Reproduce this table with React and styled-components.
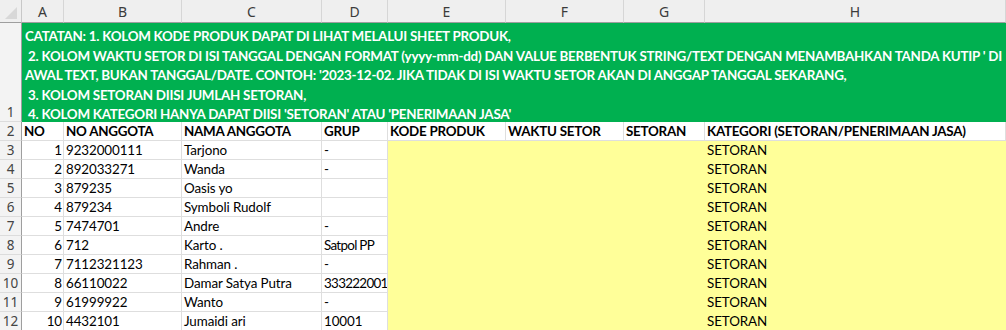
import styled, { createGlobalStyle } from "styled-components";

const GlobalStyle = createGlobalStyle`
  html, body {
    margin: 0;
    padding: 0;
    background: #ffffff;
    overflow: hidden;
  }
`;

const Sheet = styled.div`
  display: grid;
  grid-template-columns: 22px 42px 118px 140px 66px 118px 118px 81px 1fr;
  grid-template-rows: 23px 99px repeat(11, 19px);
  width: 1006px;
  height: 330px;
  overflow: hidden;
  font-family: Lato, "Liberation Sans", sans-serif;
  font-size: 13.4px;
  color: #000;
`;

const Corner = styled.div`
  position: relative;
  background: #efefef;
  border-right: 1px solid #c8c8c8;
  border-bottom: 1px solid #9e9e9e;
`;

const CornerMark = styled.div`
  position: absolute;
  right: 4px;
  bottom: 3px;
  width: 0;
  height: 0;
  border-left: 12px solid transparent;
  border-bottom: 12px solid #d8d8d8;
`;

const ColHead = styled.div`
  display: flex;
  align-items: center;
  justify-content: center;
  background: #efefef;
  border-right: 1px solid #d6d6d6;
  border-bottom: 1px solid #9e9e9e;
  font-family: "Noto Sans", "Open Sans", sans-serif;
  font-size: 14px;
  color: #3b3b3b;
  padding-top: 1px;
`;

const RowHead = styled.div`
  display: flex;
  align-items: flex-end;
  justify-content: center;
  background: #f3f3f3;
  border-right: 1px solid #9e9e9e;
  border-bottom: 1px solid #dcdcdc;
  font-family: "Noto Sans", "Open Sans", sans-serif;
  font-size: 13.5px;
  line-height: 18px;
  color: #444;
`;

const Note = styled.div`
  grid-column: 2 / -1;
  background: #00b050;
  color: #fff;
  font-weight: 700;
  padding: 4px 0 0 3px;
  line-height: 19.5px;
  letter-spacing: -0.25px;
  white-space: pre;
  overflow: hidden;
`;

const NoteLine = styled.div`
  display: block;
`;

const Cell = styled.div`
  display: flex;
  align-items: center;
  justify-content: ${(p) => (p.$align === "right" ? "flex-end" : "flex-start")};
  padding: 0 ${(p) => (p.$tight ? "0" : "1px")} 0 2px;
  line-height: 18px;
  white-space: nowrap;
  overflow: hidden;
  font-weight: ${(p) => (p.$bold ? 700 : 400)};
  letter-spacing: ${(p) => (p.$bold ? "-0.25px" : p.$tight ? "-0.7px" : "-0.1px")};
  background: ${(p) => (p.$fill ? "#ffff99" : "#ffffff")};
  border-right: 1px solid ${(p) => (p.$fill ? "#ffff99" : "#dedede")};
  border-bottom: 1px solid ${(p) => (p.$fill ? "#ffff99" : "#dedede")};
`;

const columns = ["A", "B", "C", "D", "E", "F", "G", "H"];

const noteLines = [
  "CATATAN: 1. KOLOM KODE PRODUK DAPAT DI LIHAT MELALUI SHEET PRODUK,",
  " 2. KOLOM WAKTU SETOR DI ISI TANGGAL DENGAN FORMAT (yyyy-mm-dd) DAN VALUE BERBENTUK STRING/TEXT DENGAN MENAMBAHKAN TANDA KUTIP ' DI",
  "AWAL TEXT, BUKAN TANGGAL/DATE. CONTOH: '2023-12-02. JIKA TIDAK DI ISI WAKTU SETOR AKAN DI ANGGAP TANGGAL SEKARANG,",
  " 3. KOLOM SETORAN DIISI JUMLAH SETORAN,",
  " 4. KOLOM KATEGORI HANYA DAPAT DIISI 'SETORAN' ATAU 'PENERIMAAN JASA'",
];

const headers = [
  "NO",
  "NO ANGGOTA",
  "NAMA ANGGOTA",
  "GRUP",
  "KODE PRODUK",
  "WAKTU SETOR",
  "SETORAN",
  "KATEGORI (SETORAN/PENERIMAAN JASA)",
];

const members = [
  { no: 1, id: "9232000111", name: "Tarjono", group: "-" },
  { no: 2, id: "892033271", name: "Wanda", group: "-" },
  { no: 3, id: "879235", name: "Oasis yo", group: "" },
  { no: 4, id: "879234", name: "Symboli Rudolf", group: "" },
  { no: 5, id: "7474701", name: "Andre", group: "-" },
  { no: 6, id: "712", name: "Karto .", group: "Satpol PP" },
  { no: 7, id: "7112321123", name: "Rahman .", group: "-" },
  { no: 8, id: "66110022", name: "Damar Satya Putra", group: "333222001" },
  { no: 9, id: "61999922", name: "Wanto", group: "-" },
  { no: 10, id: "4432101", name: "Jumaidi ari", group: "10001" },
];

export default function App() {
  return (
    <>
      <GlobalStyle />
      <Sheet>
        <Corner>
          <CornerMark />
        </Corner>
        {columns.map((c) => (
          <ColHead key={c}>{c}</ColHead>
        ))}

        <RowHead>1</RowHead>
        <Note>
          {noteLines.map((line, i) => (
            <NoteLine key={i}>{line}</NoteLine>
          ))}
        </Note>

        <RowHead>2</RowHead>
        {headers.map((h) => (
          <Cell key={h} $bold>
            {h}
          </Cell>
        ))}

        {members.map((m, i) => (
          <>
            <RowHead key={`r${i}`}>{i + 3}</RowHead>
            <Cell $align="right">{m.no}</Cell>
            <Cell>{m.id}</Cell>
            <Cell>{m.name}</Cell>
            <Cell $tight={m.group.length > 8}>{m.group}</Cell>
            <Cell $fill />
            <Cell $fill />
            <Cell $fill />
            <Cell $fill>SETORAN</Cell>
          </>
        ))}
      </Sheet>
    </>
  );
}
